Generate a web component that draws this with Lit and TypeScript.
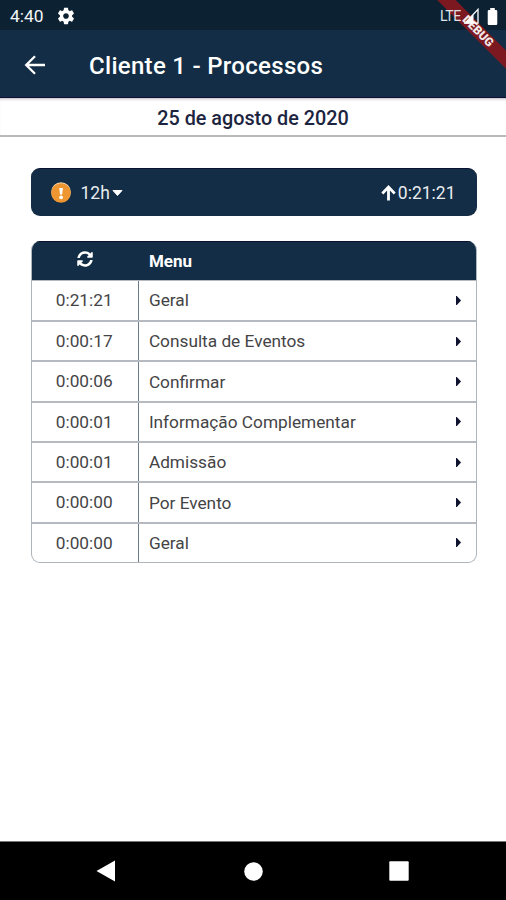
import { LitElement, html, css, svg } from "lit";
import { customElement } from "lit/decorators.js";

const rows: [string, string][] = [
  ["0:21:21", "Geral"],
  ["0:00:17", "Consulta de Eventos"],
  ["0:00:06", "Confirmar"],
  ["0:00:01", "Informação Complementar"],
  ["0:00:01", "Admissão"],
  ["0:00:00", "Por Evento"],
  ["0:00:00", "Geral"],
];

const gear = svg`<path fill="#fff" d="M19.43 12.98c.04-.32.07-.64.07-.98s-.03-.66-.07-.98l2.11-1.65c.19-.15.24-.42.12-.64l-2-3.46c-.12-.22-.39-.3-.61-.22l-2.49 1c-.52-.4-1.08-.73-1.69-.98l-.38-2.65C14.46 2.18 14.25 2 14 2h-4c-.25 0-.46.18-.49.42l-.38 2.65c-.61.25-1.17.59-1.69.98l-2.49-1c-.23-.09-.49 0-.61.22l-2 3.46c-.13.22-.07.49.12.64l2.11 1.65c-.04.32-.07.65-.07.98s.03.66.07.98l-2.11 1.65c-.19.15-.24.42-.12.64l2 3.46c.12.22.39.3.61.22l2.49-1c.52.4 1.08.73 1.69.98l.38 2.65c.03.24.24.42.49.42h4c.25 0 .46-.18.49-.42l.38-2.65c.61-.25 1.17-.59 1.69-.98l2.49 1c.23.09.49 0 .61-.22l2-3.46c.12-.22.07-.49-.12-.64l-2.11-1.65zM12 15.5c-1.93 0-3.5-1.57-3.5-3.5s1.57-3.5 3.5-3.5 3.5 1.57 3.5 3.5-1.57 3.5-3.5 3.5z"/>`;

@customElement("app-root")
export class AppRoot extends LitElement {
  static styles = css`
    :host {
      display: flex;
      flex-direction: column;
      position: relative;
      width: 506px;
      height: 900px;
      overflow: hidden;
      background: #fff;
      font-family: Roboto, sans-serif;
      color: #444446;
    }
    * { box-sizing: border-box; }
    svg { display: block; flex: none; }
    .status {
      height: 30px;
      flex: none;
      display: flex;
      align-items: center;
      padding: 2px 8px 0 10px;
      background: #0c2233;
      color: #f4f6f8;
    }
    .clock { font-size: 17.4px; line-height: 20px; width: 47px; white-space: nowrap; }
    .spacer { flex: 1; }
    .indicators {
      position: relative;
      z-index: 2;
      display: flex;
      align-items: center;
    }
    .lte { font-size: 14px; line-height: 16px; padding-bottom: 1px; letter-spacing: -0.3px; margin-right: 3px; color: #dfe3e7; }
    .signal { margin-right: 8px; }
    .bar {
      height: 68px;
      flex: none;
      display: flex;
      align-items: center;
      padding: 3px 0 0 24px;
      background: #122d45;
      border-bottom: 1px solid #0a1233;
      color: #fff;
      gap: 43px;
    }
    .title { font-size: 24px; letter-spacing: 0.3px; font-weight: 500; line-height: 30px; white-space: nowrap; padding-top: 1px; }
    .date {
      height: 39px;
      flex: none;
      border-bottom: 2px solid #bababa;
      box-shadow: inset 0 3px 3px -2px #bdb2bf;
      text-align: center;
      font-size: 19.8px;
      font-weight: 500;
      line-height: 41px;
      color: #1c2440;
    }
    .content { flex: 1; padding: 30.5px 29.5px 0 30.5px; }
    .summary {
      height: 48.5px;
      display: flex;
      align-items: center;
      padding: 1px 21px 0 20px;
      border-radius: 9px;
      background: #122d45;
      border-top: 1px solid #0a1233;
      color: #e9ecef;
      font-size: 17.5px;
    }
    .period { margin-left: 9px; }
    .caret { margin-left: 2px; }
    .up { margin-right: 2px; }
    .table {
      margin-top: 25px;
      border-radius: 9px;
      overflow: hidden;
      border: 1px solid #aeb5bb;
      height: 322px;
      border-top: 0;
    }
    .head, .row { display: grid; grid-template-columns: 107.4px 1fr; }
    .head {
      height: 39px;
      margin: 0 -1px;
      padding-left: 1px;
      background: #122d45;
      border-top: 1px solid #0a1233;
      color: #fff;
      font-size: 17px;
      font-weight: 700;
      line-height: 39px;
    }
    .sync { display: flex; justify-content: center; padding: 9px 1px 0 0; }
    .head .label { padding-left: 10px; }
    .row {
      height: 40.36px;
      border-top: 2px solid #b4babf;
      font-size: 17.25px;
      line-height: 38px;
    }
    .row:nth-child(2) { border-top-width: 1px; line-height: 39px; height: 40px; }
    .time { border-right: 1px solid #6d7c88; text-align: center; padding-right: 1px; }
    .cell { display: flex; align-items: center; justify-content: space-between; padding: 0 15px 0 10px; }
    .nav {
      height: 59px;
      flex: none;
      background: #000;
      border-top: 1px solid #777;
      display: flex;
      justify-content: space-between;
      align-items: center;
      padding: 0 97px 0 96px;
    }
    .home { margin-left: 2px; }
    .ribbon {
      position: absolute;
      z-index: 1;
      left: 418px;
      top: 24.5px;
      width: 120px;
      height: 12.5px;
      transform: rotate(45deg);
      background: #7c1820;
      color: #f3e9ea;
      font-size: 12px;
      font-weight: 900;
      line-height: 13px;
      text-align: center;
    }
  `;

  render() {
    return html`
      <div class="status">
        <span class="clock">4:40</span>
        <svg width="18" height="18" viewBox="1 1 22 22">${gear}</svg>
        <span class="spacer"></span>
        <div class="indicators">
          <span class="lte">LTE</span>
          <svg class="signal" width="15" height="16" viewBox="0 0 15 16">
            <path d="M1 15.2 14 1.4V15.2Z" fill="none" stroke="#fff" stroke-width="1.3" />
            <path d="M1 15.2 9.5 6.2V15.2Z" fill="#fff" />
          </svg>
          <svg width="11" height="17" viewBox="0 0 12 17" preserveAspectRatio="none">
            <path d="M3.5 0h5v2H10q1.2 0 1.2 1.2V15.8Q11.2 17 10 17H2Q.8 17 .8 15.8V3.2Q.8 2 2 2h1.5Z" fill="#fff" />
          </svg>
        </div>
      </div>
      <div class="bar">
        <svg width="22" height="20" viewBox="0 0 22 20">
          <path d="M21 10H2.5M11 1.2 2.2 10 11 18.8" fill="none" stroke="#fff" stroke-width="2.3" />
        </svg>
        <span class="title">Cliente 1 - Processos</span>
      </div>
      <div class="date">25 de agosto de 2020</div>
      <div class="content">
        <div class="summary">
          <svg width="21" height="22" viewBox="0 0 21 22">
            <circle cx="10" cy="10" r="9.8" fill="#f2d3a8" />
            <circle cx="10" cy="11" r="9.8" fill="#ee9732" />
            <path d="M8.3 6h3.6l-.7 6.5H9Z" fill="#fff" />
            <circle cx="10.1" cy="15.3" r="1.9" fill="#fff" />
          </svg>
          <span class="period">12h</span>
          <svg class="caret" width="11" height="8" viewBox="0 0 11 8">
            <path d="M1 1.5h9L5.5 6.5Z" fill="#fff" stroke="#fff" stroke-linejoin="round" />
          </svg>
          <span class="spacer"></span>
          <svg class="up" width="15" height="16" viewBox="0 0 15 16">
            <path d="M7.5 15.5V2M1.3 8.4 7.5 2.1l6.2 6.3" fill="none" stroke="#fff" stroke-width="2.8" />
          </svg>
          <span>0:21:21</span>
        </div>
        <div class="table">
          <div class="head">
            <div class="sync">
              <svg width="16" height="16" viewBox="0 0 512 512">
                <path fill="#fff" d="M370.7 133.3C339.5 104 298.9 88 255.8 88c-77.5.1-144.3 53.2-162.8 126.9-1.3 5.4-6.1 9.2-11.7 9.2H24.1c-7.5 0-13.2-6.8-11.8-14.2C33.9 94.9 134.8 8 256 8c66.4 0 126.8 26.1 171.3 68.7L463 41c15.1-15.1 41-4.4 41 17v134c0 13.3-10.7 24-24 24H346c-21.4 0-32.1-25.9-17-41zM32 296h134c21.4 0 32.1 25.9 17 41l-41.8 41.8c31.3 29.3 71.8 45.3 114.9 45.2 77.4-.1 144.3-53.1 162.8-126.8 1.3-5.4 6.1-9.2 11.7-9.2h57.3c7.5 0 13.2 6.8 11.8 14.2C478.1 417.1 377.2 504 256 504c-66.4 0-126.8-26.1-171.3-68.7L49 471c-15.1 15.1-41 4.4-41-17V320c0-13.3 10.7-24 24-24z" />
              </svg>
            </div>
            <div class="label">Menu</div>
          </div>
          ${rows.map(
            ([time, name]) => html`
              <div class="row">
                <div class="time">${time}</div>
                <div class="cell">
                  <span>${name}</span>
                  <svg width="5" height="9" viewBox="0 0 5 9">
                    <path d="M0 0 .8 0 5 4.5.8 9H0Z" fill="#10132f" />
                  </svg>
                </div>
              </div>
            `
          )}
        </div>
      </div>
      <div class="nav">
        <svg width="19" height="22" viewBox="0 0 19 22"><path d="M.5 11 19 .5v21Z" fill="#fff" /></svg>
        <svg class="home" width="19" height="19" viewBox="0 0 19 19"><circle cx="9.5" cy="9.5" r="9.3" fill="#fff" /></svg>
        <svg width="20" height="20" viewBox="0 0 20 20"><rect x=".3" y=".3" width="19.4" height="19.4" rx="1" fill="#fff" /></svg>
      </div>
      <div class="ribbon">DEBUG</div>
    `;
  }
}
